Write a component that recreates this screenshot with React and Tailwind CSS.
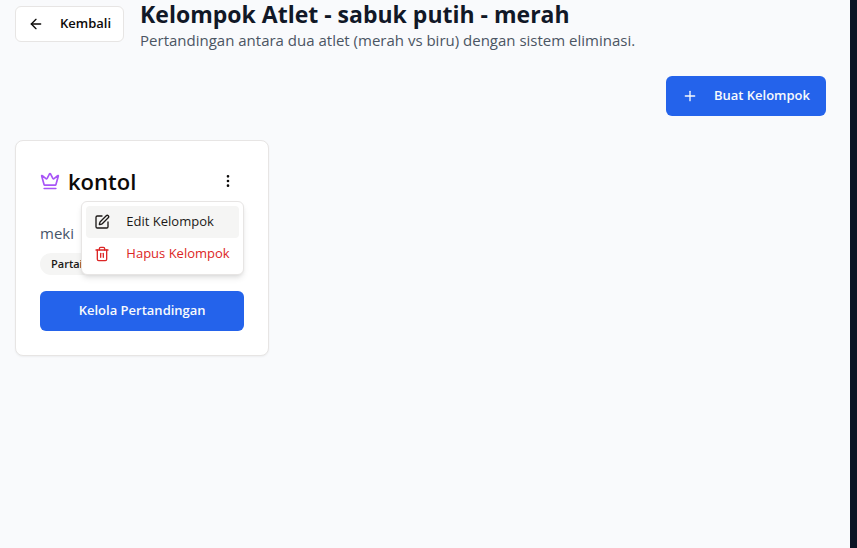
import { ArrowLeft, Crown, EllipsisVertical, Plus, SquarePen, Trash2 } from "lucide-react";

function Header() {
  return (
    <header className="flex items-start gap-4">
      <button
        type="button"
        className="mt-1.5 flex h-9 shrink-0 items-center gap-4 rounded-md border border-[#e7e5e4] bg-white px-3 text-[13px] font-semibold text-[#0c0a09]"
      >
        <ArrowLeft size={16} aria-hidden="true" />
        Kembali
      </button>
      <div>
        <h1 className="text-[23px] leading-7 font-bold text-[#111827]">
          Kelompok Atlet - sabuk putih - merah
        </h1>
        <p className="text-[15px] leading-6 text-[#4b5563]">
          Pertandingan antara dua atlet (merah vs biru) dengan sistem eliminasi.
        </p>
      </div>
    </header>
  );
}

function GroupMenu() {
  return (
    <div
      role="menu"
      aria-label="Aksi kelompok"
      className="absolute top-full right-0 mt-1 min-w-[163px] rounded-md border border-[#e7e5e4] bg-white p-1 shadow-md"
    >
      <button
        type="button"
        role="menuitem"
        className="flex h-8 w-full items-center gap-4 rounded-sm bg-[#f5f5f4] px-2 text-[13px] whitespace-nowrap text-[#1c1917]"
      >
        <SquarePen size={16} aria-hidden="true" />
        Edit Kelompok
      </button>
      <button
        type="button"
        role="menuitem"
        className="flex h-8 w-full items-center gap-4 rounded-sm px-2 text-[13px] whitespace-nowrap text-[#dc2626]"
      >
        <Trash2 size={16} aria-hidden="true" />
        Hapus Kelompok
      </button>
    </div>
  );
}

function GroupCard({ name, description, badge }) {
  return (
    <article className="rounded-lg border border-[#e7e5e4] bg-white p-6 shadow-xs">
      <div className="flex items-center justify-between pb-6">
        <div className="flex items-center gap-2">
          <Crown size={20} className="text-[#a855f7]" aria-hidden="true" />
          <h2 className="text-[22px] leading-8 font-semibold text-[#0c0a09]">{name}</h2>
        </div>
        <div className="relative">
          <button
            type="button"
            aria-label="Buka menu"
            aria-haspopup="menu"
            aria-expanded="true"
            className="flex size-8 items-center justify-center rounded-md text-[#0c0a09]"
          >
            <EllipsisVertical size={16} aria-hidden="true" />
          </button>
          <GroupMenu />
        </div>
      </div>
      <p className="text-[15px] leading-6 text-[#475569]">{description}</p>
      <div className="mt-2 flex">
        <span className="rounded-full border border-transparent bg-[#f5f5f4] px-2.5 py-0.5 text-[11px] leading-4 font-semibold text-[#1c1917]">
          {badge}
        </span>
      </div>
      <button
        type="button"
        className="mt-4 h-10 w-full rounded-md bg-[#2463eb] px-4 text-[13px] font-semibold text-slate-50"
      >
        Kelola Pertandingan
      </button>
    </article>
  );
}

export default function App() {
  return (
    <div className="flex min-h-screen bg-[#0b1424] pr-[7px] font-['Open_Sans','Noto_Sans',sans-serif]">
      <main className="min-w-0 grow bg-[#f9fafc] pr-6 pl-[15px]">
        <Header />
        <div className="mt-6 flex justify-end">
          <button
            type="button"
            className="flex h-10 items-center gap-4 rounded-md bg-[#2463eb] px-4 text-[13px] font-semibold text-slate-50"
          >
            <Plus size={16} aria-hidden="true" />
            Buat Kelompok
          </button>
        </div>
        <section className="mt-6 grid grid-cols-3 gap-6">
          <GroupCard name="kontol" description="meki" badge="Partai" />
        </section>
      </main>
    </div>
  );
}
